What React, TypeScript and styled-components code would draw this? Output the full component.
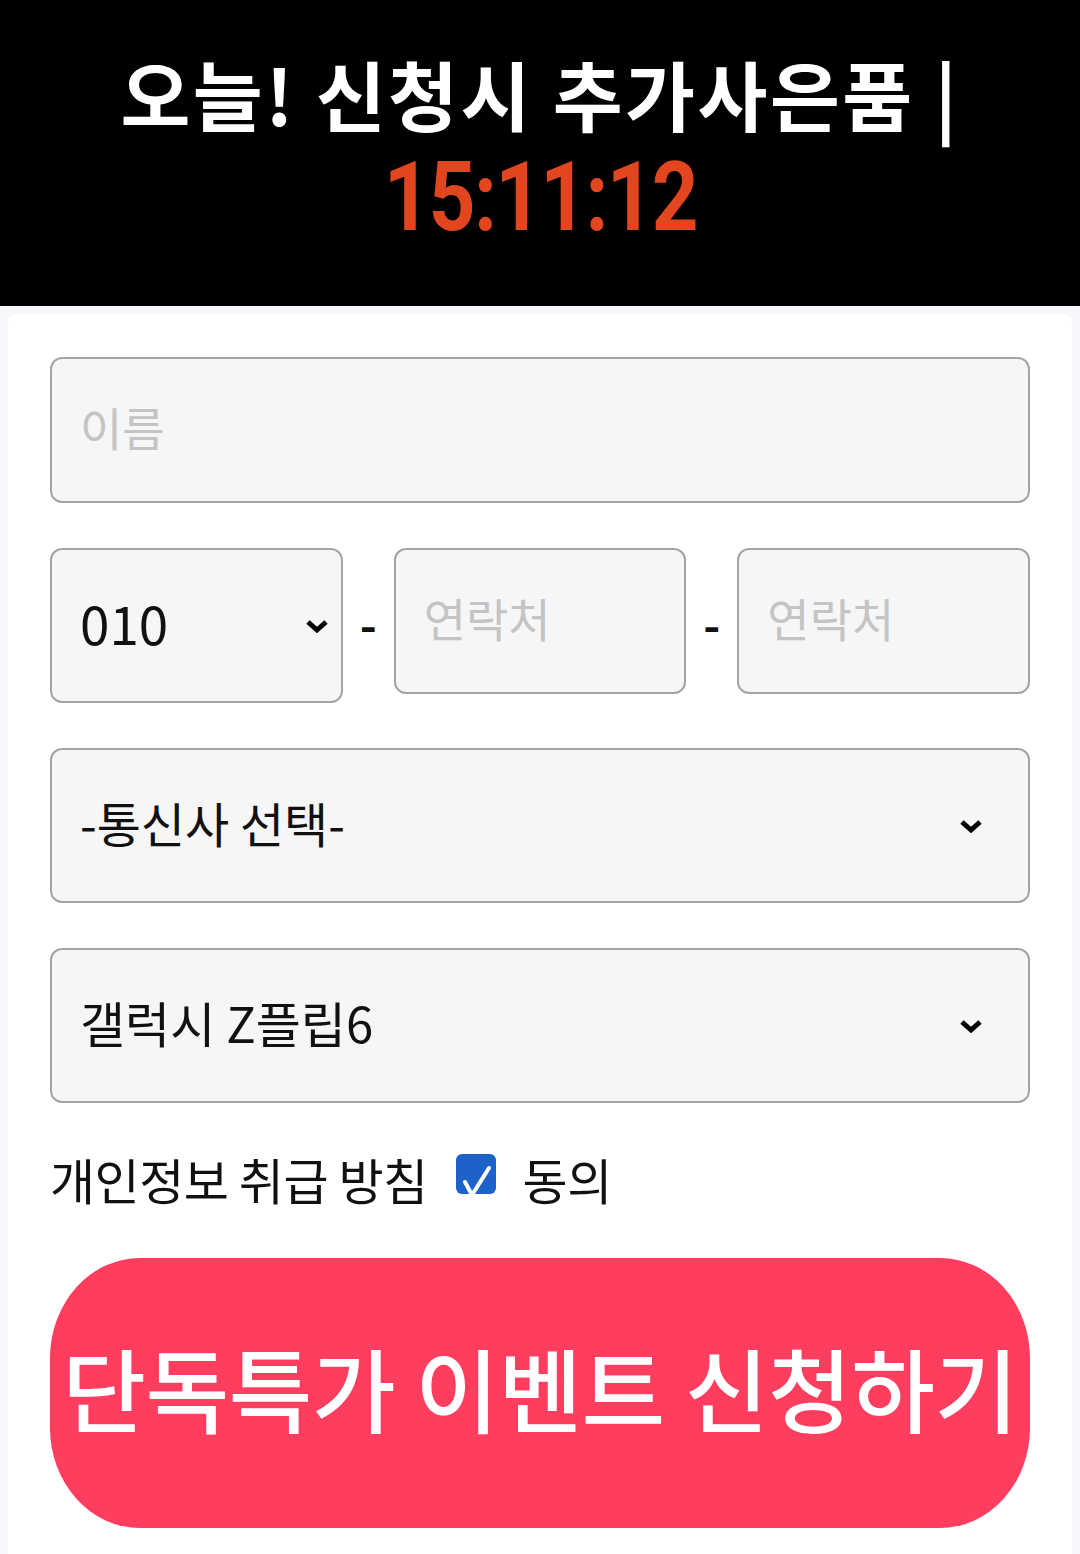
import React from 'react'
import styled, { createGlobalStyle } from 'styled-components'

const GlobalStyle = createGlobalStyle`
  html, body {
    margin: 0;
    padding: 0;
    background: #f7f8fc;
  }
  body {
    font-family: "Noto Sans CJK KR", "Noto Sans", sans-serif;
  }
  * {
    box-sizing: border-box;
  }
`

// Black banner with countdown
const Banner = styled.header`
  background: #000;
  height: 306px;
  padding-top: 43px;
  display: flex;
  flex-direction: column;
  align-items: center;
`
const BannerTitle = styled.h1`
  margin: 0;
  color: #fff;
  font-family: "Noto Sans CJK KR", sans-serif;
  font-weight: 700;
  font-size: 76px;
  line-height: 100px;
  letter-spacing: 2.5px;
  white-space: nowrap;
`
const Timer = styled.div`
  display: inline-block;
  margin-top: 4px;
  color: #e2461f;
  font-family: Roboto, "Liberation Sans", sans-serif;
  font-weight: 700;
  font-size: 96px;
  line-height: 100px;
  letter-spacing: -2px;
  transform: scaleX(0.85);
`

const Card = styled.main`
  margin: 8px 8px 0;
  background: #fff;
  border-radius: 8px;
  padding: 43px 42px 40px;
  display: flex;
  flex-direction: column;
  gap: 45px;
`

const fieldBase = `
  width: 100%;
  margin: 0;
  background: #f6f6f6;
  border: 2px solid #a5a5a5;
  border-radius: 12px;
  color: #111;
  font-family: "Noto Sans CJK KR", sans-serif;
  outline: none;
`

const TextInput = styled.input`
  ${fieldBase}
  height: 146px;
  padding: 0 28px 8px;
  font-size: 46px;
  &::placeholder {
    color: #c4c4c4;
  }
`

const SelectWrap = styled.div`
  position: relative;
  height: 155px;
`
const Select = styled.select<{ $size?: number }>`
  ${fieldBase}
  appearance: none;
  -webkit-appearance: none;
  height: 100%;
  padding: 0 28px 8px;
  font-size: ${p => p.$size ?? 48}px;
`
const Chevron = styled.svg<{ $right: number }>`
  position: absolute;
  top: 50%;
  right: ${p => p.$right}px;
  width: 24px;
  height: 16px;
  margin-top: -8px;
  pointer-events: none;
`

const PhoneRow = styled.div`
  display: grid;
  grid-template-columns: 1fr 51px 1fr 51px 1fr;
  align-items: start;
`
const Dash = styled.span`
  align-self: center;
  text-align: center;
  font-size: 46px;
  font-weight: 700;
  color: #111;
  line-height: 1;
  padding-bottom: 6px;
`

const AgreeRow = styled.label`
  display: flex;
  align-items: center;
  height: 60px;
  font-size: 49px;
  color: #111;
  letter-spacing: -0.5px;
`
const Box = styled.span`
  width: 40px;
  height: 40px;
  margin: 0 27px 0 28px;
  border-radius: 6px;
  background: #1c62c9;
  display: flex;
  overflow: hidden;
  flex-shrink: 0;
  position: relative;
  top: -4px;
`

const SubmitButton = styled.button`
  margin-top: 5px;
  height: 270px;
  border: none;
  border-radius: 90px / 100px;
  background: #ff3d5f;
  color: #fff;
  font-family: "Noto Sans CJK KR", sans-serif;
  font-weight: 500;
  font-size: 91px;
  letter-spacing: -0.5px;
  white-space: nowrap;
  padding: 0 0 14px;
  display: flex;
  align-items: center;
  justify-content: center;
  overflow: visible;
`

function Arrow({ right }: { right: number }) {
  return (
    <Chevron $right={right} viewBox="0 0 24 16">
      <path d="M3 4 L12 12 L21 4" fill="none" stroke="#000" strokeWidth="5" />
    </Chevron>
  )
}

export default function App() {
  return (
    <>
      <GlobalStyle />
      <Banner>
        <BannerTitle>오늘! 신청시 추가사은품 |</BannerTitle>
        <Timer>15:11:12</Timer>
      </Banner>
      <Card>
        <TextInput placeholder='이름' />
        <PhoneRow>
          <SelectWrap>
            <Select $size={53} defaultValue='010'>
              <option>010</option>
              <option>011</option>
              <option>016</option>
            </Select>
            <Arrow right={14} />
          </SelectWrap>
          <Dash>-</Dash>
          <TextInput placeholder='연락처' />
          <Dash>-</Dash>
          <TextInput placeholder='연락처' />
        </PhoneRow>
        <SelectWrap>
          <Select defaultValue='-통신사 선택-'>
            <option>-통신사 선택-</option>
            <option>SKT</option>
            <option>KT</option>
            <option>LG U+</option>
          </Select>
          <Arrow right={47} />
        </SelectWrap>
        <SelectWrap>
          <Select $size={49} defaultValue='갤럭시 Z플립6'>
            <option>갤럭시 Z플립6</option>
            <option>갤럭시 Z폴드6</option>
          </Select>
          <Arrow right={47} />
        </SelectWrap>
        <AgreeRow>
          개인정보 취급 방침
          <Box>
            <svg width='40' height='40' viewBox='0 0 40 40'>
              <path d='M9 28 L16 41 L33 14' fill='none' stroke='#fff' strokeWidth='4' strokeLinecap='round' strokeLinejoin='round' />
            </svg>
          </Box>
          동의
        </AgreeRow>
        <SubmitButton>단독특가 이벤트 신청하기</SubmitButton>
      </Card>
    </>
  )
}
